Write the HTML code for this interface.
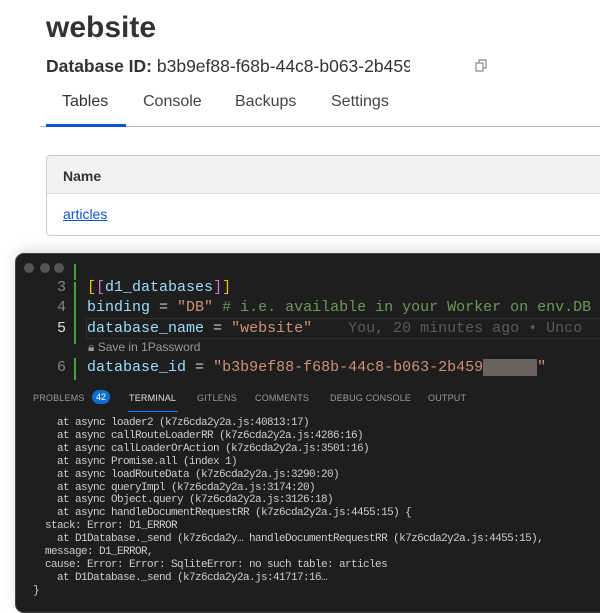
<!DOCTYPE html>
<html><head><meta charset="utf-8"><style>
*{margin:0;padding:0;box-sizing:border-box}
body{width:600px;height:593px;overflow:hidden;background:#fff;font-family:"Liberation Sans",sans-serif;position:relative}
.h1{position:absolute;left:46px;top:11px;font-size:30px;font-weight:bold;color:#333}
.dbid{position:absolute;left:46px;top:56px;font-size:17.5px;color:#333;width:364px;overflow:hidden;white-space:nowrap}
.tabs{position:absolute;left:40px;top:92px;width:560px;height:35px;border-bottom:1px solid #bbb}
.tab{position:absolute;top:1px;font-size:16px;color:#444}
.tabline{position:absolute;left:6px;top:32px;width:80px;height:3px;background:#0a55c9}
.tbl{position:absolute;left:46px;top:155px;width:570px;height:81px;border:1px solid #ccc;border-radius:4px;overflow:hidden}
.th{height:38px;background:#f2f2f2;border-bottom:1px solid #ddd;font-size:14px;font-weight:bold;color:#333;padding:12px 0 0 16px}
.td{padding:12px 0 0 16px;font-size:14px;color:#0a55c9;text-decoration:underline}
.win{position:absolute;left:15px;top:253px;width:600px;height:360px;background:#1e1e1e;border-radius:9px;border:1px solid #444;box-shadow:0 -4px 12px rgba(0,0,0,.12);overflow:hidden}
.dot{position:absolute;top:9px;width:10px;height:10px;border-radius:50%;background:#555}
.mono{font-family:"Liberation Mono",monospace}
.ln{position:absolute;left:30px;width:20px;text-align:right;font-size:15px;color:#858585}
.code{position:absolute;left:71px;font-size:15px;white-space:pre;color:#9cdcfe}
.gb{position:absolute;left:58px;width:2px;background:#3fa33f}
.panel{position:absolute;left:0;top:130px;width:600px;height:240px}
.pt{position:absolute;top:9px;font-size:9px;color:#999;letter-spacing:.2px}
.term{position:absolute;left:17px;top:163px;font-size:11px;line-height:12.9px;color:#cccccc;white-space:pre;letter-spacing:-0.6px}
</style></head><body>
<div class="h1">website</div>
<div class="dbid"><b>Database ID:</b> b3b9ef88-f68b-44c8-b063-2b459(</div>
<svg style="position:absolute;left:475px;top:59px" width="13" height="13" viewBox="0 0 13 13" fill="none" stroke="#888" stroke-width="1.2"><rect x="1" y="4" width="7" height="8"/><path d="M4 4V1h7v8H8"/></svg>
<div class="tabs">
<div class="tab" style="left:22px;color:#333">Tables</div>
<div class="tab" style="left:103px">Console</div>
<div class="tab" style="left:195px">Backups</div>
<div class="tab" style="left:291px">Settings</div>
<div class="tabline"></div>
</div>
<div class="tbl"><div class="th">Name</div><div class="td">articles</div></div>

<div class="win">
<div class="dot" style="left:8px"></div><div class="dot" style="left:24px"></div><div class="dot" style="left:38px"></div>
<div class="gb" style="top:10px;height:16px"></div>
<div class="gb" style="top:28px;height:62px"></div>
<div class="gb" style="top:104px;height:22px"></div>
<div class="mono ln" style="top:25px">3</div>
<div class="mono ln" style="top:45px">4</div>
<div class="mono ln" style="top:66px;color:#ddd">5</div>
<div class="mono ln" style="top:105px">6</div>
<div class="mono code" style="top:25px"><span style="color:#e5c100">[</span><span style="color:#d16fd6">[</span>d1_databases<span style="color:#d16fd6">]</span><span style="color:#e5c100">]</span></div>
<div class="mono code" style="top:45px">binding <span style="color:#ccc">=</span> <span style="color:#ce9178">"DB"</span> <span style="color:#6a9955"># i.e. available in your Worker on env.DB</span></div>
<div style="position:absolute;left:70px;top:64px;width:540px;height:21px;border:1px solid #2e2e2e"></div>
<div class="mono code" style="top:66px">database_name <span style="color:#ccc">=</span> <span style="color:#ce9178">"website"</span>    <span style="color:#5a5a5a">You, 20 minutes ago • Unco</span></div>
<div style="position:absolute;left:72px;top:86px;font-size:12px;color:#999">🔒︎ Save in 1Password</div>
<div class="mono code" style="top:105px">database_id <span style="color:#ccc">=</span> <span style="color:#ce9178">"b3b9ef88-f68b-44c8-b063-2b459<span style="background:#6a6360;color:#6a6360">xxxxxx</span>"</span></div>
<div class="panel">
<div class="pt" style="left:17px">PROBLEMS</div>
<div style="position:absolute;left:76px;top:6px;width:18px;height:14px;border-radius:7px;background:#0a6fd1;color:#fff;font-size:9px;text-align:center;line-height:14px">42</div>
<div class="pt" style="left:113px;color:#e0e0e0">TERMINAL</div>
<div style="position:absolute;left:112px;top:27px;width:50px;height:1px;background:#0a84ff"></div>
<div class="pt" style="left:181px">GITLENS</div>
<div class="pt" style="left:239px">COMMENTS</div>
<div class="pt" style="left:314px">DEBUG CONSOLE</div>
<div class="pt" style="left:412px">OUTPUT</div>
</div>
<div class="mono term">    at async loader2 (k7z6cda2y2a.js:40813:17)
    at async callRouteLoaderRR (k7z6cda2y2a.js:4286:16)
    at async callLoaderOrAction (k7z6cda2y2a.js:3501:16)
    at async Promise.all (index 1)
    at async loadRouteData (k7z6cda2y2a.js:3290:20)
    at async queryImpl (k7z6cda2y2a.js:3174:20)
    at async Object.query (k7z6cda2y2a.js:3126:18)
    at async handleDocumentRequestRR (k7z6cda2y2a.js:4455:15) {
  stack: Error: D1_ERROR
    at D1Database._send (k7z6cda2y… handleDocumentRequestRR (k7z6cda2y2a.js:4455:15),
  message: D1_ERROR,
  cause: Error: Error: SqliteError: no such table: articles
    at D1Database._send (k7z6cda2y2a.js:41717:16…
}</div>
</div>
</body></html>
